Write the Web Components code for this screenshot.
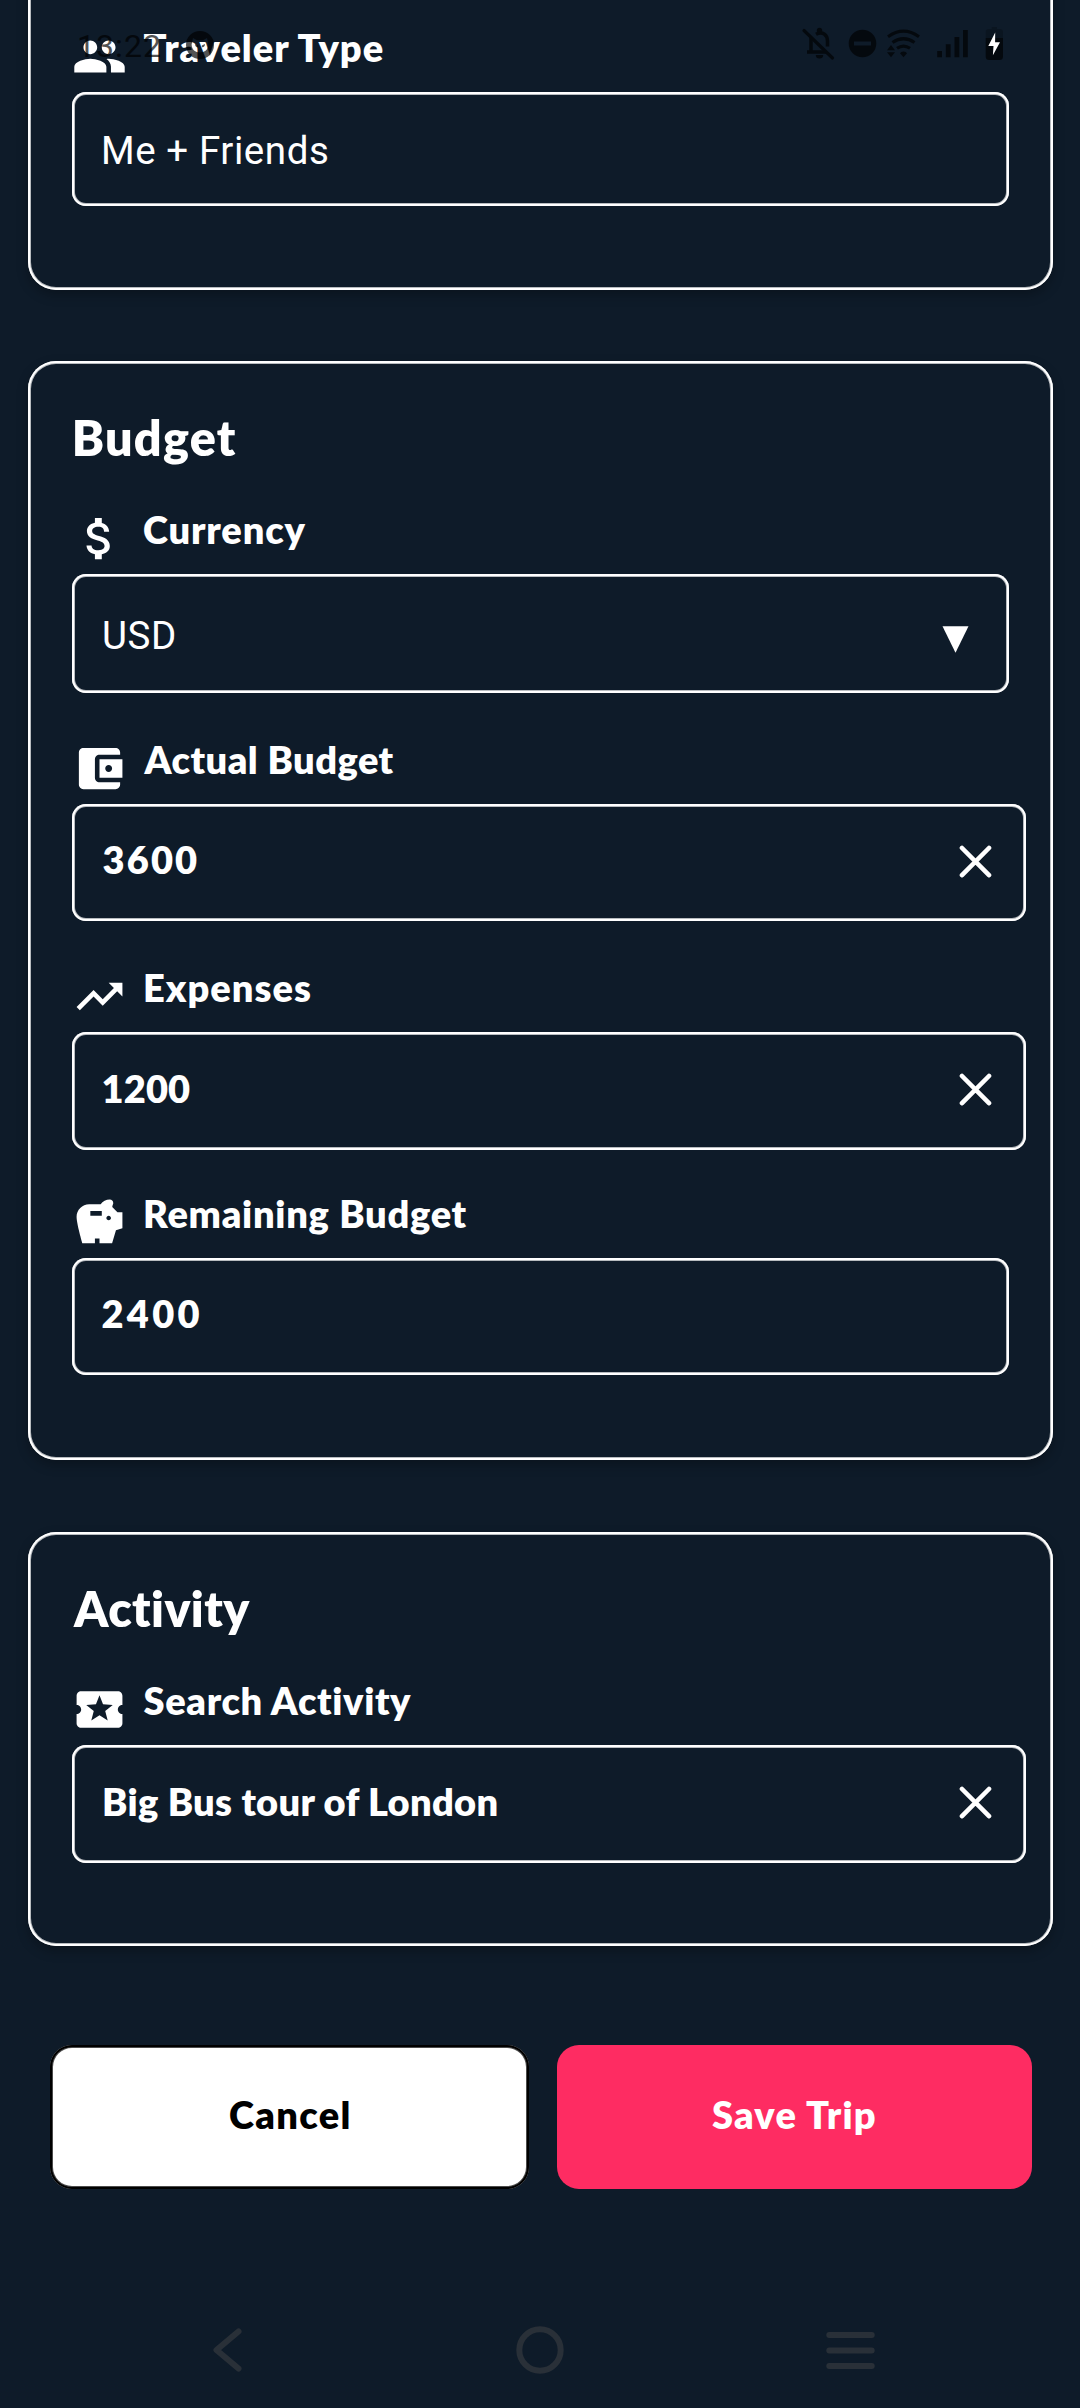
<!DOCTYPE html>
<html lang="en">
<head>
<meta charset="utf-8">
<title>Trip editor</title>
<style>
html,body{margin:0;background:#0e1b29}
body{width:1080px;height:2408px;overflow:hidden;position:relative;color:#fff;font-family:Lato,"Open Sans",sans-serif}
</style>
</head>
<body>
<trip-page></trip-page>
<status-bar></status-bar>

<script>
const define = (name, html, ready) => {
  const t = document.createElement('template');
  t.innerHTML = html;
  customElements.define(name, class extends HTMLElement {
    connectedCallback() {
      if (this.shadowRoot) return;
      const content = t.content.cloneNode(true);
      if (ready) ready(this, content);
      this.attachShadow({ mode: 'open' }).append(content);
    }
  });
};

/* A line of text whose ink starts at `at` and spans `span` pixels. */
const ctx = document.createElement('canvas').getContext('2d');
define('fit-text', `<style>:host{display:block;white-space:pre;font-kerning:normal;font-variant-ligatures:none}</style><slot></slot>`, el => {
  const s = getComputedStyle(el), text = el.textContent;
  ctx.font = `${s.fontWeight} ${s.fontSize} ${s.fontFamily}`;
  const m = ctx.measureText(text);
  const ink = m.actualBoundingBoxLeft + m.actualBoundingBoxRight;
  el.style.letterSpacing = ((+el.getAttribute('span') - ink) / (text.length - 1)).toFixed(3) + 'px';
  el.style.marginLeft = (+el.getAttribute('at') + m.actualBoundingBoxLeft).toFixed(2) + 'px';
});

const ICONS = {
  people: 'M16 11c1.66 0 2.99-1.34 2.99-3S17.66 5 16 5c-1.66 0-3 1.34-3 3s1.34 3 3 3zm-8 0c1.66 0 2.99-1.34 2.99-3S9.66 5 8 5C6.34 5 5 6.34 5 8s1.34 3 3 3zm0 2c-2.33 0-7 1.17-7 3.5V19h14v-2.5c0-2.33-4.67-3.5-7-3.5zm8 0c-.29 0-.62.02-.97.05 1.16.84 1.97 1.97 1.97 3.45V19h6v-2.5c0-2.33-4.67-3.5-7-3.5z',
  money: 'M11.8 10.9c-2.27-.59-3-1.2-3-2.15 0-1.09 1.01-1.85 2.7-1.85 1.78 0 2.44.85 2.5 2.1h2.21c-.07-1.72-1.12-3.3-3.21-3.81V3h-3v2.16c-1.94.42-3.5 1.68-3.5 3.61 0 2.31 1.91 3.46 4.7 4.13 2.5.6 3 1.48 3 2.41 0 .69-.49 1.79-2.7 1.79-2.06 0-2.87-.92-2.98-2.1h-2.2c.12 2.19 1.76 3.42 3.68 3.83V21h3v-2.15c1.95-.37 3.5-1.5 3.5-3.55 0-2.84-2.43-3.81-4.7-4.4z',
  wallet: 'M21 18v1c0 1.1-.9 2-2 2H5c-1.11 0-2-.9-2-2V5c0-1.1.89-2 2-2h14c1.1 0 2 .9 2 2v1h-9c-1.11 0-2 .9-2 2v8c0 1.1.89 2 2 2h9zm-9-2h10V8H12v8zm4-2.5c-.83 0-1.5-.67-1.5-1.5s.67-1.5 1.5-1.5 1.5.67 1.5 1.5-.67 1.5-1.5 1.5z',
  trend: 'M16 6l2.29 2.29-4.88 4.88-4-4L2 16.59 3.41 18l6-6 4 4 6.3-6.29L22 12V6z',
  savings: 'M19.83,7.5l-2.27-2.27c0.07-0.42,0.18-0.81,0.32-1.15C17.96,3.9,18,3.71,18,3.5C18,2.67,17.33,2,16.5,2c-1.64,0-3.09,0.79-4,2l-5,0C4.46,4,2,6.46,2,9.5S4.5,21,4.5,21l5.5,0v-2h2v2l5.5,0l1.68-5.59L22,14.47V7.5H19.83z M13,9H8V7h5V9z M16,11c-0.55,0-1-0.45-1-1c0-0.55,0.45-1,1-1s1,0.45,1,1C17,10.55,16.55,11,16,11z',
  ticket: 'M20 12c0-1.1.9-2 2-2V6c0-1.1-.9-2-2-2H4c-1.1 0-1.99.9-1.99 2v4c1.1 0 1.99.9 1.99 2s-.89 2-2 2v4c0 1.1.9 2 2 2h16c1.1 0 2-.9 2-2v-4c-1.1 0-2-.9-2-2zm-4.42 4.8L12 14.5l-3.58 2.3 1.08-4.12-3.29-2.69 4.24-.25L12 5.8l1.54 3.95 4.24.25-3.29 2.69 1.09 4.11z'
};
define('field-icon', `<style>:host{display:block;width:55px;height:55px}svg{display:block}</style><svg width="55" height="55" viewBox="0 0 24 24" fill="currentColor" fill-rule="evenodd"><path/></svg>`,
  (el, r) => r.querySelector('path').setAttribute('d', ICONS[el.getAttribute('name')]));

define('form-field', `<style>
:host{display:flex;flex-direction:column;gap:8px;width:937px}
:host([wide]){width:954px}
.label{display:flex;height:55px;gap:13px;font:800 38px/36px Lato,sans-serif}
.box{display:flex;justify-content:space-between;box-sizing:border-box;height:var(--h,118px);border-radius:14px;
 padding-left:28px;box-shadow:inset 0 0 0 2px #fff,inset 0 0 0 3px rgba(255,255,255,.7);font:800 38px/46px Lato,sans-serif}
.value{padding-top:var(--p,33px)}
:host([plain]) .box{font:400 38.5px/46px Roboto,sans-serif}
.clear,.drop{display:none}
:host([wide]) .clear{display:block;margin:41px 34.5px 0 0}
:host([drop]) .drop{display:block;margin:52px 40px 0 0}
</style>
<div class="label"><field-icon></field-icon><slot name="label"></slot></div>
<div class="box"><div class="value"><slot></slot></div>
<svg class="clear" width="33" height="33" viewBox="0 0 33 33"><path d="M3 3 30 30.2M30 3 3 30.2" stroke="#fff" stroke-width="4.6" stroke-linecap="round"/></svg>
<svg class="drop" width="27" height="27" viewBox="0 0 27 27"><path d="M.5.2h26L13.5 26.8z" fill="#fff"/></svg>
</div>`, (el, r) => r.querySelector('field-icon').setAttribute('name', el.getAttribute('icon')));

define('form-card', `<style>
:host{display:block;box-sizing:border-box;margin:0 27px 0 28px;padding:34px 0 83px 44px;border-radius:28px;background:#0e1b29;
 box-shadow:inset 0 0 0 2px #fff,inset 0 0 0 3px rgba(255,255,255,.7),0 5px 12px rgba(0,0,0,.27)}
:host([first]){margin-top:-60px;padding-top:89px;padding-bottom:84px}
.title{height:116px;font:800 48.5px/84px Lato,sans-serif}
:host([first]) .title{display:none}
.fields{display:flex;flex-direction:column;gap:48px}
</style><div class="title"><slot name="title"></slot></div><div class="fields"><slot></slot></div>`);

define('action-button', `<style>
:host{display:block;box-sizing:border-box;height:144px;border-radius:22px;background:#fe2c62;font:800 38px/139px Lato,sans-serif}
:host([light]){background:#fff;color:#000;box-shadow:inset 0 0 0 2px #000,inset 0 0 0 3px rgba(0,0,0,.7)}
</style><slot></slot>`);

define('nav-bar', `<style>:host{display:flex;justify-content:space-between;align-items:center;height:50px;margin:0 205px 0 212px}
svg{display:block;fill:none;stroke:#293038;stroke-width:6;stroke-linecap:round;stroke-linejoin:round}</style>
<svg width="31" height="44" viewBox="0 0 31 44"><path d="M26.5 3.5 4.5 22l22 18.5"/></svg>
<svg width="48" height="48" viewBox="0 0 48 48" style="margin-left:11px"><circle cx="24" cy="24" r="20.7"/></svg>
<svg width="49" height="38" viewBox="0 0 49 38"><path d="M3.3 4h42.4M3.3 19.5h42.4M3.3 35h42.4"/></svg>`);

define('status-bar', `<style>
:host{display:flex;justify-content:space-between;align-items:flex-start;position:absolute;left:0;top:0;width:1080px;height:80px;color:#000}
.left{display:flex;opacity:.67;font:400 32px/38px Roboto,sans-serif;padding-top:27px}
.left svg{margin-left:24px;margin-top:3.5px}
svg{display:block}
.right{margin:24px 72px 0 0}
</style>
<div class="left"><fit-text at="79" span="81">13:22</fit-text>
<svg width="28" height="28" viewBox="0 0 28 28"><path fill-rule="evenodd" d="M14 0a14 14 0 1 0 0 28 14 14 0 0 0 0-28zM7 7l4 2.2h6L21 7l1.4 6.5c0 5-3.8 8-8.4 8s-8.4-3-8.4-8zM9 13l3.2 1.5v1.7C10 16.500 9 15 9 13zm10 0-3.200 1.500v1.700C18 16.500 19 15 19 13z"/></svg></div>
<svg class="right" width="208" height="40" viewBox="800 24 208 40">
<g opacity=".65">
<path d="M804 30.500l28.500 27.500" stroke="#000" stroke-width="3.200" stroke-linecap="round"/>
<path d="M811 37.500v14.500M807 52h19" fill="none" stroke="#000" stroke-width="3.500"/>
<path d="M816 34.300c7-4 11.500 1.500 11.500 6.700v5.500" fill="none" stroke="#000" stroke-width="3.500"/>
<circle cx="819.500" cy="30.500" r="2.700"/><path d="M815.800 55h7.400a3.700 3.500 0 0 1-7.400 0z"/>
<path fill-rule="evenodd" d="M862.500 29.700a13.800 13.800 0 1 0 0 27.600 13.800 13.800 0 0 0 0-27.600zM854 41.500h17v4h-17z"/>
<g fill="none" stroke="#000" stroke-width="3.200"><path d="M888 36.700q15.500-11 31 0M892.500 42.500q11-7.500 22 0M897 48.300q6.500-4.500 13 0"/></g>
<path d="M903.500 51.500q-2.500 0-3.500 1.700l3.500 4.100 3.500-4.100q-1-1.700-3.500-1.700zM887 50.200h8l-4-5.200zM887 52.200h8l-4 5.100z"/>
<path d="M937.200 51h4.800v6.300h-4.800zM945.800 44.300h4.800v13h-4.800zM954.500 37h4.800v20.300h-4.800zM963 30h4.800v27.300H963z"/>
<path d="M985.700 38H1003v18.500a3.500 3.500 0 0 1-3.500 3.500h-10.300a3.500 3.500 0 0 1-3.500-3.500z"/>
</g>
<path opacity=".22" d="M985.700 38v-6a3 3 0 0 1 3-3h3v-2h5.300v2h3a3 3 0 0 1 3 3v6z"/>
<path fill="#fff" d="M995.200 32.500 988.300 46h5.200l-.6 9.300L1000 42.300h-4.900z"/>
</svg>`);

define('trip-page', `<style>
:host{display:flex;flex-direction:column;height:2408px}
.budget{margin-top:71px;padding-bottom:85px}
.activity{margin-top:72px}
.actions{display:grid;grid-template-columns:479px 475px;gap:27.5px;margin:99px 0 0 50px}
nav-bar{margin-top:136px}
</style>
<form-card first>
 <form-field plain icon="people" style="--h:114px;--p:36px"><fit-text slot="label" at="3.6" span="241">Traveler Type</fit-text><fit-text at="4" span="223">Me + Friends</fit-text></form-field>
</form-card>
<form-card class="budget"><fit-text slot="title" at="2.7" span="161">Budget</fit-text>
 <form-field plain drop icon="money" style="--h:119px;--p:39px"><fit-text slot="label" at="4" span="161.500">Currency</fit-text><fit-text at="4" span="70">USD</fit-text></form-field>
 <form-field wide icon="wallet" style="--h:117px;--p:32px"><fit-text slot="label" at="3.6" span="250">Actual Budget</fit-text><fit-text at="2.600" span="94.500">3600</fit-text></form-field>
 <form-field wide icon="trend"><fit-text slot="label" at="5" span="165">Expenses</fit-text><fit-text at="2.600" span="87.500">1200</fit-text></form-field>
 <form-field icon="savings" style="--h:117px;--p:32px;margin-top:-3px"><fit-text slot="label" at="5" span="321.600">Remaining Budget</fit-text><fit-text at="2.600" span="96.800">2400</fit-text></form-field>
</form-card>
<form-card class="activity"><fit-text slot="title" at="1" span="178">Activity</fit-text>
 <form-field wide icon="ticket"><fit-text slot="label" at="3.6" span="269.500">Search Activity</fit-text><fit-text at="4" span="394">Big Bus tour of London</fit-text></form-field>
</form-card>
<div class="actions">
 <action-button light><fit-text at="180" span="118.500">Cancel</fit-text></action-button>
 <action-button><fit-text at="155.500" span="164">Save Trip</fit-text></action-button>
</div>
<nav-bar></nav-bar>`);
</script>
</body>
</html>
